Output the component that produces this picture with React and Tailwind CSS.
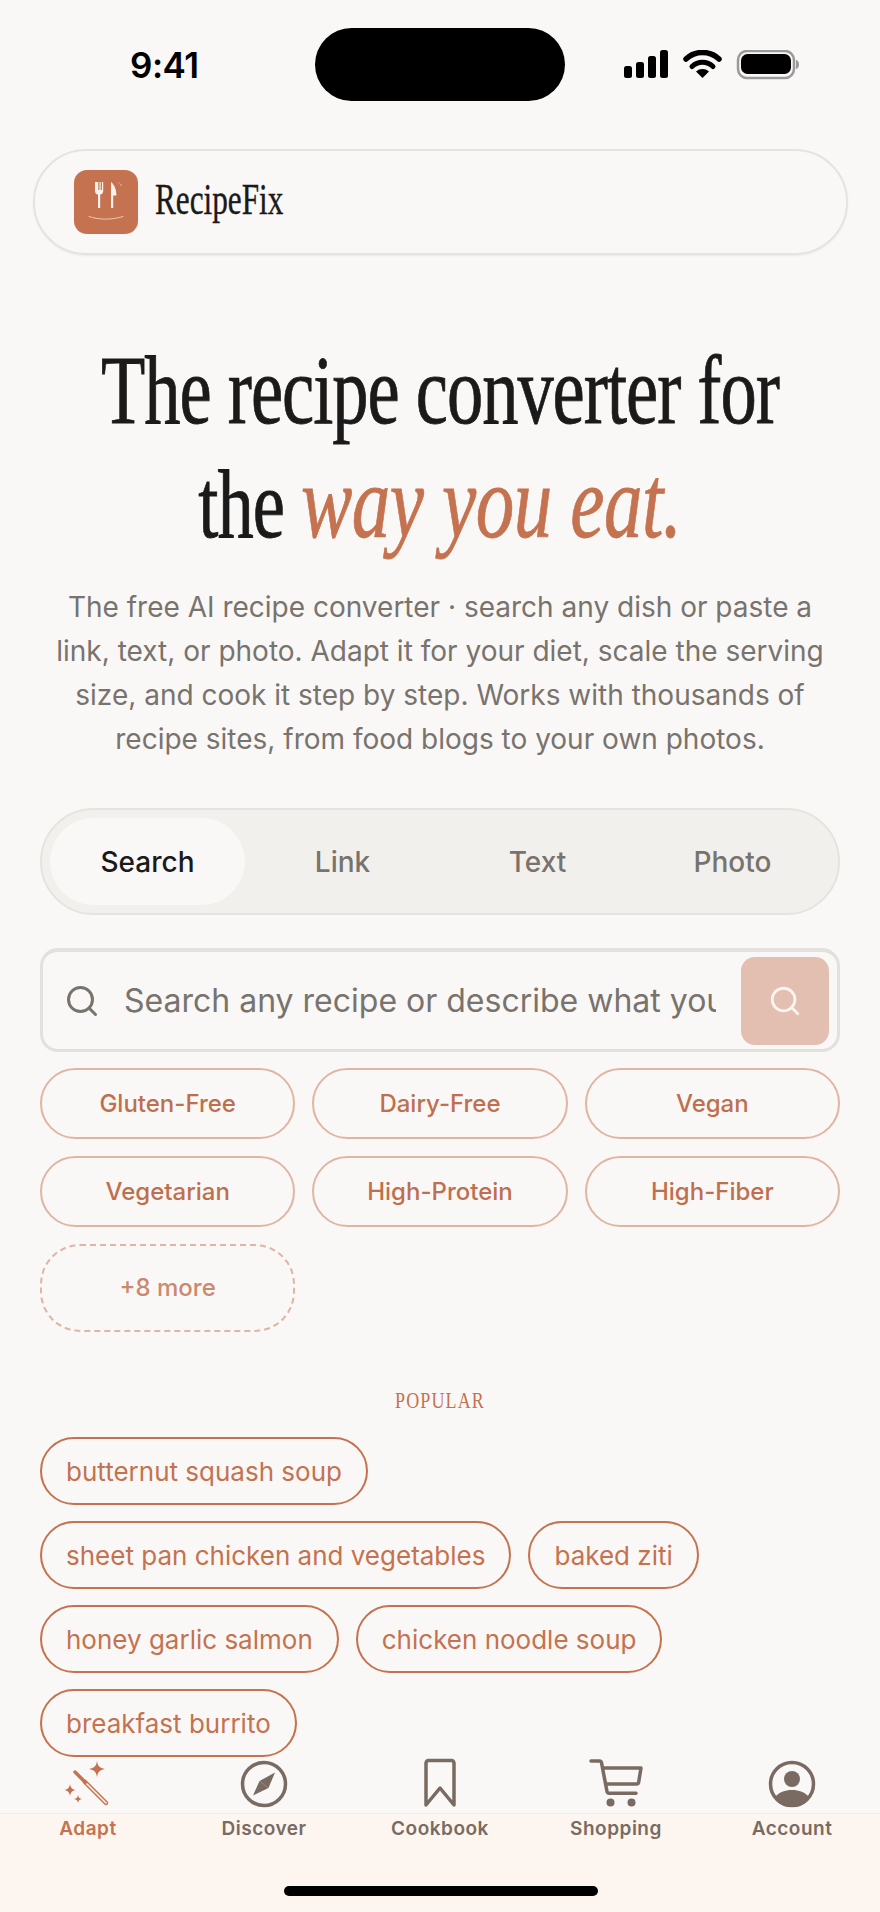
import { Search } from 'lucide-react';

const diets = ['Gluten-Free', 'Dairy-Free', 'Vegan', 'Vegetarian', 'High-Protein', 'High-Fiber'];
const popular = [
  ['butternut squash soup'],
  ['sheet pan chicken and vegetables', 'baked ziti'],
  ['honey garlic salmon', 'chicken noodle soup'],
  ['breakfast burrito'],
];
const tabs = ['Search', 'Link', 'Text', 'Photo'];

const StatusBar = () => (
  <div className="relative h-[149px] shrink-0">
    <span className="absolute left-[130px] top-[44px] text-[35px] leading-[42px] font-semibold text-black font-['Inter',sans-serif] tracking-[-0.5px]">9:41</span>
    <div className="absolute left-[315px] top-[28px] w-[250px] h-[73px] rounded-full bg-black"></div>
    <div className="absolute left-[624px] top-[50px]">
      <svg width="176" height="30" viewBox="0 0 176 30">
        <rect x="0" y="16" width="8" height="12" rx="2.500" fill="#000" />
        <rect x="12" y="12" width="8" height="16" rx="2.500" fill="#000" />
        <rect x="24" y="6" width="8" height="22" rx="2.500" fill="#000" />
        <rect x="36" y="0" width="8" height="28" rx="2.500" fill="#000" />
        <path d="M62 9a24 24 0 0 1 33 0" fill="none" stroke="#000" strokeWidth="5.500" strokeLinecap="round" />
        <path d="M68 16.500a15 15 0 0 1 21 0" fill="none" stroke="#000" strokeWidth="5" strokeLinecap="round" />
        <path d="M72 21.500a10 10 0 0 1 13 0L78.500 28z" fill="#000" />
        <rect x="114" y="1" width="56" height="27" rx="9" fill="none" stroke="#9a9a9a" strokeWidth="2.500" />
        <rect x="117" y="4" width="50" height="20" rx="6.500" fill="#000" />
        <path d="M172 10c2 .6 3 2 3 4.500s-1 3.900-3 4.500z" fill="#9a9a9a" />
      </svg>
    </div>
  </div>
);

const Logo = () => (
  <div className="w-[64px] h-[64px] rounded-[13px] bg-[#c4724f] shrink-0">
    <svg width="64" height="64" viewBox="0 0 64 64">
      <path d="M21 12v9c0 2 1.200 3.200 3 3.600V38h2.200V24.600c1.800-.4 3-1.600 3-3.600v-9h-1.300v8h-1.200v-8h-1.200v8h-1.200v-8z" fill="#fdf3ec" />
      <path d="M37 38V12c3.400 2.500 5.600 8 5.400 13.500H39.200V38z" fill="#fdf3ec" />
      <circle cx="47" cy="15" r="0.700" fill="#f4d4c2" />
      <circle cx="45" cy="13" r="0.500" fill="#f4d4c2" />
      <path d="M15 46.500c10 3.500 23 3.500 34 0" fill="none" stroke="#f0c8b4" strokeWidth="1" strokeLinecap="round" />
    </svg>
  </div>
);

const Wand = () => (
  <svg width="48" height="50" viewBox="0 0 48 50" fill="none">
    <path d="M33 3c.8 5 2.500 7 8 8-5.500 1-7.200 3-8 8-.8-5-2.500-7-8-8 5.500-1 7.200-3 8-8z" fill="#c4724f" />
    <path d="M6 26c.6 3.600 1.800 5.200 6 6-4.200.8-5.400 2.400-6 6-.6-3.600-1.800-5.200-6-6 4.200-.8 5.400-2.400 6-6z" fill="#c4724f" />
    <path d="M14 37c.4 2.400 1.200 3.400 4 4-2.800.6-3.600 1.600-4 4-.4-2.400-1.200-3.400-4-4 2.800-.6 3.600-1.600 4-4z" fill="#c4724f" />
    <path d="M11 14L22 25" stroke="#c4724f" strokeWidth="3.500" strokeLinecap="round" />
    <path d="M21 24L42 45" stroke="#c4724f" strokeWidth="4.500" strokeLinecap="round" />
    <path d="M23 26L42 45" stroke="#faf8f6" strokeWidth="1.600" strokeLinecap="round" />
  </svg>
);

const Compass = () => (
  <svg width="48" height="48" viewBox="0 0 48 48" fill="none">
    <circle cx="24" cy="24" r="21.500" stroke="#7a6b62" strokeWidth="3.500" />
    <path d="M35 12.500 L28.500 28 L19.500 21z" fill="#7a6b62" />
    <path d="M13 35.500 L19.500 21 L28.500 28z" fill="#7a6b62" />
  </svg>
);

const Bookmark = () => (
  <svg width="34" height="50" viewBox="0 0 34 50" fill="none">
    <path d="M3 47V5a2.500 2.500 0 0 1 2.500-2.500h23A2.500 2.500 0 0 1 31 5v42L17 30z" stroke="#7a6b62" strokeWidth="3.500" strokeLinejoin="round" />
  </svg>
);

const Cart = () => (
  <svg width="54" height="50" viewBox="0 0 54 50" fill="none">
    <path d="M2 3h8.500c1 0 1.800.7 2 1.700L18 33.500c.2 1 1 1.700 2 1.700h27" stroke="#7a6b62" strokeWidth="3.500" strokeLinecap="round" strokeLinejoin="round" />
    <path d="M12 10h40l-2.400 14.500c-.2 1-1 1.600-2 1.600H16" stroke="#7a6b62" strokeWidth="3.500" strokeLinejoin="round" />
    <circle cx="21.500" cy="44.500" r="4" fill="#7a6b62" />
    <circle cx="42.500" cy="44.500" r="4" fill="#7a6b62" />
  </svg>
);

const Person = () => (
  <svg width="48" height="48" viewBox="0 0 48 48" fill="none">
    <circle cx="24" cy="24" r="21.500" stroke="#7a6b62" strokeWidth="3.500" />
    <circle cx="24" cy="19" r="8" fill="#7a6b62" />
    <path d="M6 38c5-6 11-8 18-8s13 2 18 8c-4 6-10 9-18 9s-14-3-18-9z" fill="#7a6b62" />
  </svg>
);

const navItems = [
  { label: 'Adapt', icon: <Wand />, active: true },
  { label: 'Discover', icon: <Compass /> },
  { label: 'Cookbook', icon: <Bookmark /> },
  { label: 'Shopping', icon: <Cart /> },
  { label: 'Account', icon: <Person /> },
];

const BottomNav = () => (
  <div className="absolute left-0 right-0 bottom-0 h-[156px]">
    <div className="absolute left-0 right-0 bottom-0 h-[99px] bg-[#fdf6f0] border-t border-[#f3ede7]"></div>
    <div className="relative grid grid-cols-5">
      {navItems.map((item) => (
        <div key={item.label} className="flex flex-col items-center">
          <div className="h-[52px] flex items-end justify-center">{item.icon}</div>
          <span className={`mt-[9px] text-[19px] leading-[24px] font-semibold tracking-[0.5px] font-['Inter',sans-serif] ${item.active ? 'text-[#c4724f]' : 'text-[#7a6b62]'}`}>
            {item.label}
          </span>
        </div>
      ))}
    </div>
    <div className="absolute left-[284px] top-[130px] w-[314px] h-[10px] rounded-full bg-black"></div>
  </div>
);

export default function App() {
  return (
    <div className="relative w-[880px] h-[1912px] overflow-hidden bg-[#faf8f6] font-['Inter',sans-serif]">
      <StatusBar />

      <div className="ml-[33px] mr-[32px] h-[106px] rounded-[53px] border-2 border-[#e6e3df] shadow-[0_1px_2px_rgba(0,0,0,0.06)] flex items-center pl-[39px] gap-[17px]">
        <Logo />
        <span className="pb-[4px] font-['Liberation_Serif',serif] text-[44px] leading-none text-[#1a1a1a] origin-left scale-x-[0.71] [-webkit-text-stroke-width:0.4px]">RecipeFix</span>
      </div>

      <div className="mt-[80px] flex flex-col items-center">
        <h1 className="font-['Liberation_Serif',serif] text-[98px] leading-[111px] font-normal text-[#1a1a1a] text-center tracking-[-1.400px] whitespace-nowrap scale-x-[0.74] [-webkit-text-stroke-width:0.8px]">
          The recipe converter for
          <br />
          the <em className="italic text-[104px] text-[#c4724f] tracking-[-0.700px]">way you eat.</em>
        </h1>
        <p className="mt-[25px] w-[800px] text-center text-[28px] leading-[44px] text-[#78736d]">
          The free AI recipe converter · search any dish or paste a
          <br />
          link, text, or photo. Adapt it for your diet, scale the serving
          <br />
          size, and cook it step by step. Works with thousands of
          <br />
          recipe sites, from food blogs to your own photos.
        </p>
      </div>

      <div className="mx-[40px] mt-[47px]">
        <div className="h-[107px] rounded-[54px] bg-[#f2f0ed] border-2 border-[#e6e3df] p-[8px] grid grid-cols-4">
          {tabs.map((tab, i) => (
            <div
              key={tab}
              className={`flex items-center justify-center text-[28px] font-medium rounded-[44px] ${i === 0 ? 'bg-[#faf8f6] text-[#1a1a1a]' : 'text-[#78736d]'}`}
            >
              {tab}
            </div>
          ))}
        </div>

        <div className="mt-[33px] h-[104px] rounded-[18px] border-[3px] border-t-[4px] border-[#e3e1dd] flex items-center pl-[21px] pr-[8px]">
          <Search size={36} strokeWidth={2} className="text-[#78736d] shrink-0" />
          <div className="ml-[24px] w-[592px] overflow-hidden whitespace-nowrap text-[32px] text-[#78736d]">
            Search any recipe or describe what you want
          </div>
          <div className="ml-auto w-[88px] h-[88px] rounded-[14px] bg-[#e2bfb1] flex items-center justify-center">
            <Search size={34} strokeWidth={2} className="text-[#faf3ee]" />
          </div>
        </div>

        <div className="mt-[16px] grid grid-cols-3 gap-x-[17px] gap-y-[17px]">
          {diets.map((d) => (
            <div key={d} className="h-[71px] rounded-[36px] border-2 border-[#dfb5a3] flex items-center justify-center text-[24px] font-medium text-[#bf6f4d]">
              {d}
            </div>
          ))}
          <div className="h-[88px] rounded-[40px] border-2 border-dashed border-[#dfb5a3] flex items-center justify-center text-[24px] font-medium text-[#cb8a6d]">
            +8 more
          </div>
        </div>

        <div className="mt-[56px] text-center font-['Liberation_Serif',serif] text-[24px] leading-[24px] tracking-[1.500px] text-[#c4724f] scale-x-[0.75]">POPULAR</div>

        <div className="mt-[25px] flex flex-col gap-[16px]">
          {popular.map((row) => (
            <div key={row[0]} className="flex gap-[17px]">
              {row.map((p) => (
                <div key={p} className="h-[68px] px-[24px] rounded-[34px] border-2 border-[#c4724f] flex items-center text-[26px] text-[#c4724f] whitespace-nowrap">
                  {p}
                </div>
              ))}
            </div>
          ))}
        </div>
      </div>

      <BottomNav />
    </div>
  );
}
